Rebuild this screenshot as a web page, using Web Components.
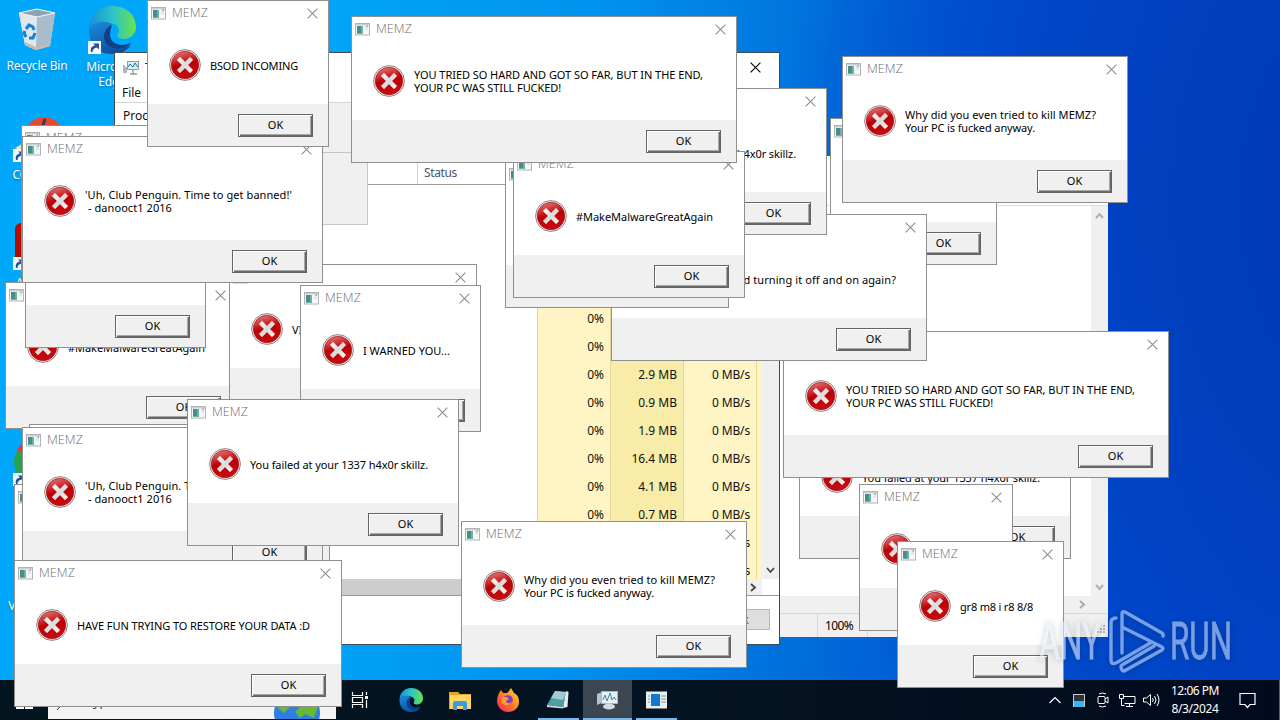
<!DOCTYPE html>
<html lang="en"><head><meta charset="utf-8"><title>Desktop</title>
<style>
html,body{margin:0;width:1280px;height:720px;overflow:hidden;font-family:"Noto Sans","Open Sans",sans-serif}
</style></head><body>
<win-desktop></win-desktop>
<script>
const define=(name,render)=>customElements.define(name,class extends HTMLElement{
  connectedCallback(){ if(this.shadowRoot) return; this.attachShadow({mode:'open'}).innerHTML=render(this); }
});

/* A single line of text whose tracking is adjusted to a given width */
customElements.define('fit-text',class extends HTMLElement{
  connectedCallback(){
    if(this.shadowRoot) return;
    this.attachShadow({mode:'open'}).innerHTML='<style>:host{display:block;white-space:pre}span{display:inline-block;white-space:pre}</style><span><slot></slot></span>';
    const s=this.shadowRoot.querySelector('span'),w=+this.getAttribute('w');
    if(w){const n=this.textContent.length,c=s.getBoundingClientRect().width;s.style.letterSpacing=((w-c)/n)+'px';}
  }
});

define('app-icon',()=>`<style>:host{display:block;width:16px;height:16px}svg{display:block}</style>
<svg width="16" height="16" viewBox="0 0 16 16"><rect x=".5" y="1.5" width="14" height="11.5" fill="#f6f8f8" stroke="#aeb4b6"/><rect x="1" y="2" width="13" height="1.5" fill="#c9cfd2"/><rect x="2" y="4" width="6" height="8" fill="#6fb0a8"/><rect x="2" y="4" width="4" height="7" fill="#4a8c88"/><path d="M10 5h3M10 7h3" stroke="#cfd9dc"/><path d="M11.5 4h1.5" stroke="#777"/></svg>`);

define('error-icon',()=>`<style>:host{display:block;width:32px;height:32px}svg{display:block}</style>
<svg width="32" height="32" viewBox="0 0 32 32"><defs><linearGradient id="r" x1="0" y1="0" x2=".3" y2="1"><stop offset="0" stop-color="#e58a86"/><stop offset=".4" stop-color="#cd2528"/><stop offset=".55" stop-color="#bb0005"/><stop offset="1" stop-color="#c80a10"/></linearGradient><linearGradient id="w" x1="0" y1="0" x2="1" y2="1"><stop offset="0" stop-color="#fff"/><stop offset=".5" stop-color="#d8dcdc"/><stop offset="1" stop-color="#fbf7ef"/></linearGradient></defs>
<circle cx="16" cy="16" r="15.4" fill="#eee" stroke="#9c7f7f" stroke-width="1"/><circle cx="16" cy="16" r="13.7" fill="url(#r)" stroke="#a31318" stroke-width=".7"/>
<path d="M8 10.9l3-3 5 5 5-5 3 3-5 5 5 5-3 3-5-5-5 5-3-3 5-5z" fill="url(#w)" stroke="#fff" stroke-opacity=".35" stroke-width=".6"/></svg>`);

define('classic-button',()=>`<style>:host{box-sizing:border-box;width:75px;height:23px;border:1px solid #646464;background:#f0f0f0;box-shadow:inset 1px 1px #fff,inset -1px -1px #696969,inset -2px -2px #a8a8a8;display:flex;align-items:center;justify-content:center;font-size:11px;line-height:13px;padding-bottom:2px;color:#000}</style><fit-text w="15"><slot></slot></fit-text>`);

define('close-mark',()=>`<style>:host{display:block;width:11px;height:11px}svg{display:block}</style><svg width="11" height="11"><path d="M.6.6l9.8 9.8M10.4.6L.6 10.4" stroke="currentColor" fill="none" stroke-width="1.1"/></svg>`);

/* Message box: titlebar, message, button strip */
define('memz-dialog',el=>{
  const g=a=>el.getAttribute(a);
  const lines=JSON.parse(g('lines')),covered=g('covered')||'';
  return `<style>
  :host{position:absolute;left:${g('x')}px;top:${g('y')}px;width:${g('w')}px;height:147px;box-sizing:border-box;border:1px solid #8f8f8f;background:#fff;display:flex;flex-direction:column;overflow:hidden;color:#000}
  header{height:24px;display:flex;align-items:center;padding:0 10px 0 3px;color:#6e6e6e;font:300 12.5px/16px "Open Sans","Noto Sans",sans-serif;box-sizing:border-box;flex:none}
  header app-icon{margin-right:5px;margin-top:1px}header close-mark{margin-left:auto;color:#8c8c8c}
  main{flex:1;display:flex;align-items:center;padding:0 0 0 21px;gap:9px;box-sizing:border-box}
  main div{font-size:11px;line-height:13px;padding-top:${lines.length>1?0:2}px}
  footer{height:42px;flex:none;background:#f0f0f0;padding:10px 15px 0;box-sizing:border-box;display:flex;justify-content:flex-end}
  </style><header><app-icon></app-icon>${covered.includes('t')?'':'<fit-text w="36">MEMZ</fit-text>'}<close-mark></close-mark></header>
  <main><error-icon></error-icon><div>${lines.map(l=>`<fit-text w="${l[1]-1}">${l[0]}</fit-text>`).join('')}</div></main>
  <footer><classic-button>${covered.includes('b')?'':'OK'}</classic-button></footer>`;
});

define('note-window',()=>`<style>
:host{position:absolute;left:700px;top:156px;width:408px;height:481px;background:#fff;display:flex;flex-direction:column;font-size:12px;color:#000}
.top{height:50px;border-bottom:1px solid #ddd;box-sizing:border-box}.body{flex:1;display:flex;justify-content:flex-end}
.v{width:17px;background:#f0f0f0;display:flex;flex-direction:column;justify-content:space-between;align-items:center;padding:6px 0 5px;box-sizing:border-box}
.h{height:17px;background:#f0f0f0;display:flex;justify-content:flex-end;align-items:center;padding-right:22px}
.s{height:23px;border-top:1px solid #d7d7d7;background:#f0f0f0;display:flex;align-items:stretch;padding-left:117px;position:relative}
.s div{border-left:1px solid #d7d7d7;width:42px;padding-left:7px;display:flex;align-items:center}
.s div.wide{width:170px}.grip{position:absolute;right:2px;bottom:2px}
</style><div class="top"></div><div class="body"><div class="v"><svg width="9" height="7"><path d="M1 6l3.5-4L8 6" fill="none" stroke="#b0b0b0" stroke-width="2"/></svg><svg width="9" height="7"><path d="M1 1l3.5 4L8 1" fill="none" stroke="#b0b0b0" stroke-width="2"/></svg></div></div>
<div class="h"><svg width="7" height="9"><path d="M1 1l4 3.5L1 8" fill="none" stroke="#aaa" stroke-width="2"/></svg></div>
<div class="s"><div><fit-text w="28">100%</fit-text></div><div class="wide">Windows</div><svg class="grip" width="10" height="10"><path d="M7 1h2M4 4h2M7 4h2M1 7h2M4 7h2M7 7h2" stroke="#b5b5a8" stroke-width="2"/></svg></div>`);

define('task-manager',()=>{
 const mb=['','','','','','','2.9 MB','0.9 MB','1.9 MB','16.4 MB','4.1 MB','0.7 MB','',''];
 return `<style>
:host{position:absolute;left:114px;top:52px;width:666px;height:593px;box-sizing:border-box;border:1px solid #3c4b58;background:#fff;display:flex;flex-direction:column;font-size:12px;color:#111;overflow:hidden}
.title{height:29px;flex:none;display:flex;align-items:center;padding:0 18px 0 8px;gap:4px;box-sizing:border-box}.title close-mark{margin-left:auto;color:#000}
.menu{height:21px;flex:none;padding:2px 0 0 7px;border-bottom:1px solid #d5d5d5;box-sizing:border-box}
.tabs{height:49px;flex:none;display:flex;background:#f0f0f0;border-bottom:1px solid #c9c9c9}
.tab{width:90px;background:#fff;padding:4px 0 0 8px;font-size:12px;box-sizing:border-box}
.head{height:32px;flex:none;display:flex;border-bottom:1px solid #9c9c9c;box-sizing:border-box;align-items:stretch;color:#4a5570}
.head .n{width:303px;border-right:1px solid #d0d0d0;box-sizing:border-box}.head .st{padding:11px 0 0 6px;}
.group{position:absolute;left:100px;top:99px;width:153px;height:73px;background:#f0f0f0;border:1px solid #c6c6c6;box-sizing:border-box}
.mid{flex:1;display:flex;min-height:0}
.sp{width:422px}.col{width:73px;flex:none;border-right:1px solid #e4d79c;box-sizing:border-box;background:#fff4c4;padding-top:7px;overflow:hidden}
.col.c{width:74px;border-left:1px solid #e4d79c}
.col.d{background:#f9eca8}.col div{height:28px;display:flex;align-items:center;justify-content:flex-end;padding-right:6px}
.tail{width:5px;background:#fff4c4}.v{flex:1;background:#f0f0f0;display:flex;align-items:flex-end;justify-content:center;padding:0 1px 5px 0}
.h{height:17px;flex:none;background:#cdcdcd;display:flex;border-bottom:1px solid #999;box-sizing:border-box}
.h i{flex:1}.h b{width:17px;background:#f0f0f0;display:flex;align-items:center;justify-content:center}.h u{width:17px;background:#fff}
.foot{height:48px;flex:none;display:flex;justify-content:flex-end;padding:13px 9px 0 0;box-sizing:border-box}
.foot span{width:90px;height:21px;box-sizing:border-box;border:1px solid #b8b8b8;background:#dedede;color:#666;display:flex;align-items:center;justify-content:center}
</style>
<div class="title"><svg width="18" height="16" viewBox="0 0 18 16"><rect x="4.5" y="1.5" width="11" height="8" fill="#d5eef8" stroke="#8fa0a8"/><path d="M5 7l2-3 3 3 2-4 3 4" stroke="#246d9b" fill="none"/><path d="M10 10v4M7 14h7M1 5v8M3 7v6" stroke="#8b9aa0" stroke-width="1.4"/></svg><span>Task</span><close-mark></close-mark></div>
<div class="menu"><fit-text w="19">File</fit-text></div>
<div class="tabs"><div class="tab">Proces</div></div>
<div class="head"><div class="n"></div><div class="st"><fit-text w="33">Status</fit-text></div></div>
<div class="mid"><div class="sp"></div>
<div class="col c">${mb.map((m,i)=>`<div>${i>3&&i<12?'0%':''}</div>`).join('')}</div><div class="col d">${mb.map(m=>`<div>${m}</div>`).join('')}</div><div class="col">${mb.map((m,i)=>`<div>${i>5?'<fit-text w="38">0 MB/s</fit-text>':''}</div>`).join('')}</div><div class="tail"></div>
<div class="v"><svg width="9" height="7"><path d="M1 1l3.5 4L8 1" fill="none" stroke="#444" stroke-width="1.7"/></svg></div></div>
<div class="h"><i></i><b><svg width="7" height="9"><path d="M1 1l4 3.5L1 8" fill="none" stroke="#444" stroke-width="1.8"/></svg></b><u></u></div>
<div class="foot"><span>End task</span></div><div class="group"></div>`;});

define('edge-logo',el=>{const s=el.getAttribute('size');return `<style>:host{display:block;width:${s}px;height:${s}px}svg{display:block}</style>
<svg width="${s}" height="${s}" viewBox="0 0 48 48"><defs><linearGradient id="a" x1="0" x2="1"><stop offset="0" stop-color="#1b91d8"/><stop offset=".5" stop-color="#2bc3c8"/><stop offset="1" stop-color="#6be34a"/></linearGradient><linearGradient id="b" x1="0" x2=".6" y2="1"><stop offset="0" stop-color="#1a8fdc"/><stop offset="1" stop-color="#0d4b9e"/></linearGradient></defs>
<path d="M1 22C2 9 12 0 24 0c14 0 24 9 24 21 0 7-6 12-12 12-6 0-8-3-6-5 2-3 1-8-4-10C17 14 5 16 1 22z" fill="url(#a)"/><path d="M1 22c5-7 17-9 23-3-7 2-9 8-8 14 2 8 11 12 20 9 3-1 5-2 7-3-4 6-11 9-19 9C9 48 0 37 1 22z" fill="url(#b)"/><path d="M24 19c-6 2-9 8-8 14 2 8 11 12 20 9 3-1 6-3 7-5-9 4-20 2-21-8 0-4 1-7 2-10z" fill="#123f88"/></svg>`;});

const badge='<svg class="badge" width="13" height="13" viewBox="0 0 13 13"><rect width="13" height="13" fill="#f4f8fb"/><path d="M3 11c-1-4 1-6 4-6.500L5 2.500h6v6L9 6.500C6 7 4.500 8.500 4.500 11z" fill="#235297"/></svg>';
define('desktop-shortcut',el=>{
  const kind=el.getAttribute('kind');
  const art={
   bin:'<svg width="48" height="48" viewBox="0 0 48 48"><path d="M6 8l18-4 18 4-5 33-14 4-11-5z" fill="#d3e0e8"/><path d="M6 8l18 4-1 33-11-5z" fill="#dfe8ed"/><path d="M24 12l18-4-5 33-14 4z" fill="#a9bcc9"/><path d="M6 8l18-4 18 4-18 4z" fill="#8ea4b2" stroke="#f2f6f8"/><path d="M12 37l11 5 14-3v2l-14 4-11-5z" fill="#c9b9ad"/><path d="M13 24l3-4 4 2 1 3M22 28l-2 5h-4M13 32l-2-4 1-2" fill="none" stroke="#1b7fd2" stroke-width="3"/></svg>',
   edge:'<edge-logo size="48"></edge-logo>',
   cc:'<svg width="48" height="48" viewBox="0 0 48 48"><circle cx="31" cy="22" r="19" fill="#e8492e"/><path d="M32 5l-4 12" stroke="#2c3f64" stroke-width="3"/><path d="M2 34l10-6v10z" fill="#f2dfae"/></svg>',
   pdf:'<svg width="48" height="48"><rect x="2" y="1" width="44" height="44" rx="6" fill="#b30b00"/></svg>',
   chrome:'<svg width="48" height="48" viewBox="0 0 48 48"><circle cx="24" cy="24" r="23" fill="#2ba24c"/><path d="M24 24L4 12A23 23 0 0 1 44 12z" fill="#e33b2e"/><circle cx="24" cy="24" r="9" fill="#4285f4" stroke="#fff" stroke-width="3"/></svg>',
   vlc:'<svg width="48" height="48"><path d="M2 2h40v42H2z" fill="#5572aa"/></svg>'}[kind];
  return `<style>:host{position:absolute;left:${el.getAttribute('x')}px;top:${el.getAttribute('y')}px;width:76px;display:flex;flex-direction:column;align-items:center;color:#fff;font-size:12px;line-height:15px;text-align:center}
  .pic{position:relative;width:48px;height:48px;margin-bottom:5px}.pic svg{display:block}.pic .badge{position:absolute;left:0;bottom:0}.t{text-shadow:0 1px 2px #0468;letter-spacing:-.2px}</style>
  <div class="pic">${art}${kind==='bin'||kind==='vlc'?'':badge}</div><div class="t"><slot></slot></div>`;});

define('task-button',el=>`<style>:host{width:49px;height:40px;box-sizing:border-box;display:flex;align-items:center;justify-content:center;${el.hasAttribute('open')?'border-bottom:2px solid #76b9ed;padding-top:2px;':''}${el.hasAttribute('active')?'background:#3b4650;':''}}
:host([open]:not([active])){width:41px;margin:0 4px}</style><slot></slot>`);

define('task-bar',()=>`<style>
:host{position:absolute;left:0;top:680px;width:1280px;height:40px;background:linear-gradient(90deg,#03151f,#041322 55%,#020a1d);display:flex;color:#fff;font-size:12px}
.start{width:48px;display:flex;align-items:center;justify-content:center;flex:none}
.search{width:288px;height:39px;background:#f3f3f3;display:flex;align-items:center;box-sizing:border-box;padding:6px 0 0 8px;color:#444;gap:14px;overflow:hidden;flex:none;font-size:13px}
.search span{padding-bottom:3px}.search .globe{margin-left:auto;margin-top:5px;display:block}
.apps{display:flex;align-items:stretch}.tray{margin-left:auto;display:flex;align-items:center}
.clock{width:62px;text-align:center;line-height:18px;margin-left:4px}
.note{margin-left:13px;margin-right:23px;height:18px}.peek{width:1px;background:#556070;align-self:stretch;margin-right:0}
svg{display:block}</style>
<div class="start"><svg width="17" height="17"><path d="M0 0h8v8H0zM9 0h8v8H9zM0 9h8v8H0zM9 9h8v8H9z" fill="#fff"/></svg></div>
<div class="search"><svg width="16" height="16"><circle cx="9" cy="6" r="5" fill="none" stroke="#333"/><path d="M5.500 10L1 15" stroke="#333"/></svg><span>Type here to search</span>
<svg class="globe" width="76" height="50" viewBox="0 0 76 50"><circle cx="37" cy="33" r="23" fill="#2f7fe0"/><path d="M18 28l8-13 9 2-3 8-8 8zM38 12l13 5 7 9-4 12-9-4-5 4-5-6 5-5z" fill="#6ab734"/><path d="M1 21l8-5 3 4-4 6-6-1z" fill="#c49be0"/><path d="M61 19l7-4 5 7-6 4z" fill="#4ea3dc"/></svg></div>
<div class="apps">
<task-button style="width:47px"><svg width="18" height="18"><path d="M1.500 1v3.500h10V1M1.500 17v-3.500h10V17M1.500 6.500h10v5h-10zM15.500 1v3M15.500 9v8" fill="none" stroke="#fff" stroke-width="1.2"/><path d="M14 5h3v3h-3z" fill="#fff"/></svg></task-button>
<task-button style="width:55px"><edge-logo size="24"></edge-logo></task-button>
<task-button style="width:44px"><svg width="22" height="20"><path d="M0 2h9l2 2h11v15H0z" fill="#e9a620"/><path d="M1 5h21v14H1z" fill="#ffd661"/><path d="M4 20v-7q0-2 2-2h10q2 0 2 2v7h-4v-4H8v4z" fill="#3e9ade"/></svg></task-button>
<task-button style="width:52px"><svg width="24" height="24" viewBox="0 0 24 24"><defs><linearGradient id="f" x1="1" y1="0" x2="0" y2="1"><stop offset="0" stop-color="#ffe226"/><stop offset=".5" stop-color="#ff8020"/><stop offset="1" stop-color="#f5156c"/></linearGradient></defs><path d="M3 5l2-3 2 3 4 0 2-2 2-3 3 5c4 2 5 5 5 9 0 6-5 10-11 10S1 19 1 13c0-3 1-5 2-8z" fill="url(#f)"/><circle cx="12" cy="12" r="4.800" fill="#7a3bd4"/><path d="M6 10c3-2 6-1 7 1l-3 2c1 3 4 3 6 0-1 5-9 6-11 0z" fill="#ff9a2a"/></svg></task-button>
<task-button open><svg width="24" height="24" viewBox="0 0 24 24"><path d="M8 3l11 1-3 15L0 17z" fill="#4f9ea6"/><path d="M8 3l11 1-3 8-12-2z" fill="#a0cfd1"/><path d="M16 20l3-17 2.500 1-1 15z" fill="#e8eded"/><path d="M0 17l16 2v1.500L0 19z" fill="#cfdede"/></svg></task-button>
<task-button active open><svg width="24" height="24" viewBox="0 0 24 24"><path d="M1 6l6-2v10l-6 3z" fill="#b8c4c9"/><rect x="5.500" y="3.500" width="16" height="12" fill="#e9f0f3" stroke="#a8b3b8"/><path d="M7 12l2-5 2 6 3-8 2 7 2-3 2 3" stroke="#4687b0" fill="none"/><ellipse cx="13" cy="18.500" rx="6" ry="3" fill="#d5dadc"/></svg></task-button>
<task-button open><svg width="22" height="18"><rect width="21" height="17" y=".5" fill="#e9eef1"/><rect x="5" y="3" width="9" height="12" fill="#0f78d2"/><path d="M2 5h2M2 8h2M2 11h2M15 5h5M15 8h5M15 11h5" stroke="#8a97a0"/></svg></task-button>
</div>
<div class="tray">
<svg width="12" height="8"><path d="M.5 7L6 1.500 11.500 7" stroke="#fff" fill="none" stroke-width="1.2"/></svg>
<svg width="12" height="13" style="margin-left:12px"><rect width="12" height="13" fill="#c6ced2"/><rect x="1" y="1" width="10" height="6" fill="#2d3338"/><rect x="1" y="7" width="10" height="6" fill="#38b6f1"/></svg>
<svg width="13" height="16" style="margin-left:12px"><rect x="1" y="4.500" width="7" height="7" rx="1" stroke="#fff" fill="none"/><path d="M8 7l3-2v6l-3-2M2 2q3-2 7 0M2 14q3 2 7 0" stroke="#fff" fill="none"/></svg>
<svg width="17" height="15" style="margin-left:9px"><path d="M5 3.500h11v7H5.500M10.500 10.500v3M7 13.500h7M.5 1.500h4v4h-4zM2.500 5.500v7h3" stroke="#fff" fill="none"/></svg>
<svg width="17" height="14" style="margin-left:7px"><path d="M.5 5h3l4-3.500v11L3.500 9h-3zM9.500 5q1.500 2 0 4M11.500 3q3 4 0 8M14 1q4 6 0 12" stroke="#fff" fill="none"/></svg>
<div class="clock"><fit-text w="48">12:06 PM</fit-text><fit-text w="47">8/3/2024</fit-text></div>
<svg class="note" width="17" height="18"><path d="M1 2.500h15v11h-5l-2.500 3-2.500-3H1z" stroke="#fff" fill="none" stroke-width="1.2"/></svg><i class="peek"></i></div>`);

define('water-mark',()=>`<style>:host{position:absolute;left:1036px;top:606px;width:200px;height:70px;opacity:.6;filter:drop-shadow(0 1px 3px rgba(0,0,0,.35))}svg{display:block}text{font-family:Roboto,sans-serif;font-weight:400}</style>
<svg width="200" height="70"><text transform="translate(3 53) scale(.62 1)" font-size="51" textLength="100" lengthAdjust="spacingAndGlyphs" fill="#e4edfb" stroke="#e4edfb" stroke-width=".8">ANY</text>
<path d="M80 12q-5 0-5 5v37q0 5 5 3l36-21M86 47V8q0-3 3-2l37 21q2 2 1 3M88 22l38 19q2 1 0 3L90 64q-3 2-4 0-2-4 0-5l32-19" fill="none" stroke="#c6dcfa" stroke-width="3.4" stroke-linejoin="round" stroke-linecap="round"/>
<text transform="translate(134 53) scale(.62 1)" font-size="51" textLength="100" lengthAdjust="spacingAndGlyphs" fill="#c6dcfa" stroke="#c6dcfa" stroke-width=".8">RUN</text></svg>`);

const uh=[["'Uh, Club Penguin. Time to get banned!'",208],[" - danooct1 2016",88]], why=[["Why did you even tried to kill MEMZ?",192],["Your PC is fucked anyway.",131]],
 hard=[["YOU TRIED SO HARD AND GOT SO FAR, BUT IN THE END,",290],["YOUR PC WAS STILL FUCKED!",148]], fail=[["You failed at your 1337 h4x0r skillz.",179]],
 mmga=[["#MakeMalwareGreatAgain",138]], warn=[["I WARNED YOU...",88]], gr8=[["gr8 m8 i r8 8/8",74]], none=[];
/* x, y, width, message lines, covered parts (t: title, b: button label), back to front */
const dialogs=[
 [21,125,301,none,'b'],[5,282,232,mmga,'t'],[25,201,181,none,'t'],[229,264,248,[["VI",11]],'tb'],[22,136,301,uh],[147,0,182,[["BSOD INCOMING",89]]],
 [830,118,167,none,'t'],[799,412,272,fail,'t'],[783,331,386,hard,'t'],[611,214,316,[["Have you tried turning it off and on again?",223]],'t'],[555,88,272,fail,'t'],
 [505,161,224,none,'tb'],[513,151,232,mmga],[351,16,386,hard],[842,56,286,why],
 [300,285,181,warn,'b'],[14,484,301,none,'tb'],[29,424,301,none,'tb'],[22,427,301,uh],[187,399,272,fail],
 [14,560,328,[["HAVE FUN TRYING TO RESTORE YOUR DATA :D",234]]],[461,521,286,why],[859,484,154,[["HACKER!",45]],'b'],[897,541,167,gr8]
];
define('win-desktop',()=>`<style>
:host{display:block;position:relative;width:1280px;height:720px;overflow:hidden;background:radial-gradient(ellipse 640px 850px at 1420px 200px,#003ab6 0,#003ebc 35%,rgba(0,70,202,.7) 70%,rgba(0,110,220,0) 100%),linear-gradient(94deg,#00a8fb 0,#00a4f8 340px,#0092ee 600px,#0074de 800px,#0056d2 1000px,#0042c2 1280px)}
</style>
<desktop-shortcut kind="bin" x="-1" y="5">Recycle Bin</desktop-shortcut>
<desktop-shortcut kind="edge" x="74" y="6">Microsoft Edge</desktop-shortcut>
<desktop-shortcut kind="cc" x="-1" y="114">CCleaner</desktop-shortcut>
<desktop-shortcut kind="pdf" x="-1" y="222">Acrobat</desktop-shortcut>
<desktop-shortcut kind="chrome" x="-1" y="438">&nbsp;</desktop-shortcut>
<desktop-shortcut kind="vlc" x="-1" y="545">VLC media</desktop-shortcut>
<note-window></note-window><task-manager></task-manager><task-bar></task-bar>
${dialogs.map(d=>`<memz-dialog x="${d[0]}" y="${d[1]}" w="${d[2]}" covered="${d[4]||''}" lines="${JSON.stringify(d[3]).replace(/"/g,'&quot;')}"></memz-dialog>`).join('')}
<water-mark></water-mark>`);
</script></body></html>
